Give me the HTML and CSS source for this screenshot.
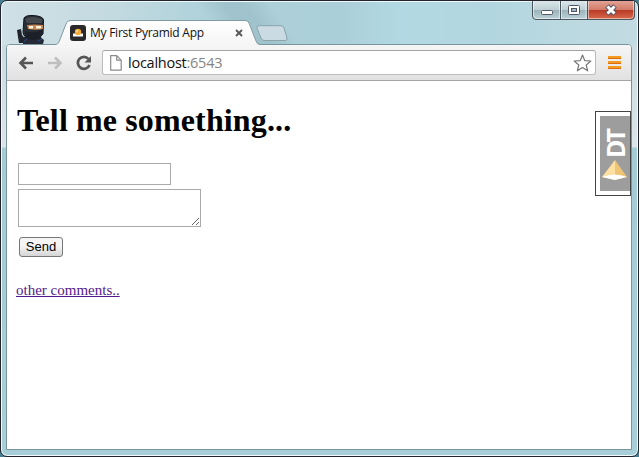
FILE: index.html
```html
<!DOCTYPE html>
<html lang="en">
<head>
<meta charset="utf-8">
<title>My First Pyramid App</title>
<link rel="stylesheet" href="styles.css">
</head>
<body>
<div class="window">
  <header class="tabstrip">
    <svg class="ninja" width="30" height="30" viewBox="0 0 30 30">
      <path d="M1 16l4-1 1 6 4 5-1 3H3l-1-6z" fill="#20232b"/>
      <path d="M7 30l1-7 4-1h11l5 4-1 4z" fill="#252a36"/>
      <path d="M8 4Q10 1 17 1.500Q27 2 27.500 6L27 20Q22 26 13 24Q7 23 7 18z" fill="#292d34" stroke="#111722"/>
      <path d="M9 5q6-4 17 0v4H11z" fill="#46494d"/>
      <path d="M11 11q8-1 16 0v4q-7 1.500-15 0z" fill="#c88752"/>
      <path d="M13 12h4v2.500h-4zM20 12h5v2.500h-5z" fill="#fff4df"/>
      <path d="M9 17q8 3 17-1l-1 8q-9 4-15 0z" fill="#1b2029"/>
      <path d="M8 28l3-3M22 27l4-2" stroke="#284a8d"/>
    </svg>
    <div class="tab">
      <svg class="tab-shape" width="205" height="26" viewBox="0 0 205 26">
        <defs><linearGradient id="tg" x2="0" y2="1"><stop stop-color="#fff"/><stop offset="1" stop-color="#f5f5f5"/></linearGradient></defs>
        <path d="M0 26V24.500Q3 24.500 4 22L11 4Q12 .500 15 .500H190Q193 .500 194 3L201 21Q202 24.500 205 24.500V26z" fill="url(#tg)"/>
        <path d="M0 24.500Q3 24.500 4 22L11 4Q12 .500 15 .500H190Q193 .500 194 3L201 21Q202 24.500 205 24.500" fill="none" stroke="#829ba3"/>
      </svg>
      <svg class="favicon" width="16" height="16" viewBox="0 0 16 16"><rect width="16" height="16" rx="3" fill="#29292b"/><path d="M3 8.500h3l2 1 2-1h3v3H3z" fill="#fff"/><circle cx="8" cy="7" r="3.200" fill="#f5ad3a"/><circle cx="7" cy="6" r="1" fill="#ffe29b"/></svg>
      <span class="tab-title">My First Pyramid App</span>
      <svg class="tab-close" width="8" height="8" viewBox="0 0 8 8"><path d="M1 1l6 6M7 1L1 7" stroke="#555" stroke-width="1.800"/></svg>
    </div>
    <svg class="new-tab" width="32" height="17" viewBox="0 0 32 17"><path d="M3 .700H25Q27 .700 28 3L31 13Q31.500 15.500 29 15.500H8Q6 15.500 5 13L1 3Q.500 .700 3 .700z" fill="#cbdbe3" stroke="#8aa4ac"/></svg>
    <svg class="controls" width="104" height="20" viewBox="0 0 104 20">
      <defs>
        <linearGradient id="cg" x2="0" y2="1"><stop stop-color="#dce7eb"/><stop offset=".48" stop-color="#bdcfd5"/><stop offset=".5" stop-color="#9bb3ba"/><stop offset="1" stop-color="#bed3d9"/></linearGradient>
        <linearGradient id="rg" x2="0" y2="1"><stop stop-color="#e3a294"/><stop offset=".48" stop-color="#d27a68"/><stop offset=".5" stop-color="#b83a25"/><stop offset="1" stop-color="#d96b4c"/></linearGradient>
      </defs>
      <path d="M.500 0V15Q.500 18.500 5 18.500H55V0z" fill="url(#cg)"/>
      <path d="M55 0V18.500H99Q102.500 18.500 102.500 15V0z" fill="url(#rg)"/>
      <path d="M1.500 0V14Q1.500 17.500 5 17.500H98Q101.500 17.500 101.500 14V0M27.500 0V17.500M29.500 0V17.500M54 0V17.500M56.500 0V17.500" fill="none" stroke="#fff" stroke-opacity=".5"/>
      <path d="M.500 0V15Q.500 18.500 4 18.500H99Q102.500 18.500 102.500 15V0M28.500 0V18M55.500 0V18" fill="none" stroke="#4a575f"/>
      <rect x="9.500" y="9.500" width="11" height="4" rx="1" fill="#fff" stroke="#525666"/>
      <rect x="36.500" y="4.500" width="11" height="9" rx="1" fill="#fff" stroke="#525666"/><rect x="39.500" y="7.500" width="5" height="3" fill="#a4bac2" stroke="#525666"/>
      <path d="M75 5l8 8M83 5l-8 8" stroke="#545363" stroke-width="5"/><path d="M75.500 5.500l7 7M82.500 5.500l-7 7" stroke="#fff" stroke-width="3"/>
    </svg>
  </header>
  <main class="browser">
    <nav class="toolbar">
      <svg class="nav-icon" width="16" height="14" viewBox="0 0 16 14"><path d="M15 7H3M8 1.500L2.500 7 8 12.500" fill="none" stroke="#555" stroke-width="2.600"/></svg>
      <svg class="nav-icon" width="16" height="14" viewBox="0 0 16 14"><path d="M1 7h12M8 1.500L13.500 7 8 12.500" fill="none" stroke="#bebebe" stroke-width="2.600"/></svg>
      <svg class="nav-icon" width="16" height="16" viewBox="0 0 16 16"><path d="M12.500 4A6 6 0 1 0 13.500 10" fill="none" stroke="#555" stroke-width="2.700"/><path d="M15 1v6.500H8.500z" fill="#555"/></svg>
      <div class="address">
        <svg width="12" height="16" viewBox="0 0 12 16"><path d="M.700 .700h6l4.500 4.500v10H.700zM6.700 .700v4.500h4.500" fill="#fff" stroke="#8b8b8b" stroke-width="1.200"/></svg>
        <span class="url">localhost<span>:6543</span></span>
        <svg class="star" width="19" height="18" viewBox="0 0 19 18"><path d="M9.500 1l2.300 5.700 6 .300-4.600 4 1.500 5.800-5.200-3.300-5.200 3.300 1.500-5.800-4.600-4 6-.300z" fill="#fff" stroke="#777" stroke-width="1.200" stroke-linejoin="round"/></svg>
      </div>
      <svg class="menu" width="13" height="13" viewBox="0 0 13 13"><path d="M0 1.500h13M0 6.500h13M0 11.500h13" stroke="#f39a20" stroke-width="3"/><path d="M0 2.500h13M0 7.500h13M0 12.500h13" stroke="#e06c12"/></svg>
    </nav>
    <section class="page">
      <h1>Tell me something...</h1>
      <form>
        <input type="text" aria-label="Name">
        <textarea aria-label="Comment"></textarea>
        <button type="button">Send</button>
      </form>
      <a href="#">other comments..</a>
      <aside class="debug">
        <div class="debug-inner">
          <span class="dt">DT</span>
          <svg width="26" height="20" viewBox="0 0 26 20"><path d="M13 0L0 17l13 3z" fill="#ffe0a0"/><path d="M13 0l12 17-12 3z" fill="#efc477"/><path d="M0 17q13-5 25 0l-12 3z" fill="#fff"/></svg>
        </div>
      </aside>
    </section>
  </main>
</div>
</body>
</html>
```
FILE: styles.css
```css
* { box-sizing: border-box; }
html { background: #477f91; }
body { margin: 0; width: 639px; height: 457px; overflow: hidden; }
.window {
  height: 457px;
  display: flex;
  flex-direction: column;
  padding: 0 6px 6px 5px;
  border: 1px solid #23232d;
  border-radius: 7px;
  box-shadow: inset 0 0 0 1px #effafd;
  background:
    linear-gradient(55deg, transparent 50%, rgba(119,155,166,.25) 54%, rgba(119,155,166,.25) 57%, transparent 61%) -110px 0 / 639px 44px no-repeat,
    linear-gradient(90deg, #cfe0e6 0, #c5dbe1 100px, #aed1da 210px, #abcfd8 340px, #b2d9e3 400px, #b2d6df 490px, #c3dbe2 100%) 0 0 / 100% 44px no-repeat,
    linear-gradient(#c3d7dc 0, #dce5e9 146px, #a5cbd4 147px, #a8ced7 100%);
}
.tabstrip { display: flex; height: 43px; flex: none; align-items: flex-end; position: relative; }
.ninja { margin-left: 10px; }
.tab { position: relative; display: flex; align-items: center; width: 205px; height: 26px; margin: 0 0 -1px 9px; padding: 2px 15px 0; z-index: 1; }
.tab-shape { position: absolute; left: 0; top: 1px; }
.favicon, .tab-title, .tab-close { position: relative; z-index: 1; }
.tab-title { margin-left: 4px; font: 12px/16px "Open Sans", "Noto Sans", sans-serif; color: #111; letter-spacing: -.25px; white-space: nowrap; }
.tab-close { margin-left: auto; margin-right: 2px; }
.new-tab { margin: 0 0 2px -4px; }
.controls { margin: 0 -4px 0 auto; align-self: flex-start; }
.browser { flex: 1; min-height: 0; display: flex; flex-direction: column; border: 1px solid #78949d; border-radius: 4px 4px 0 0; background: #fff; overflow: hidden; }
.toolbar { flex: none; height: 36px; display: flex; align-items: center; padding: 0 10px 0 11px; border-bottom: 1px solid #a5a5a5; background: linear-gradient(#f6f6f6, #e1e1e1); }
.nav-icon { margin-right: 13px; }
.address { flex: 1; display: flex; align-items: center; height: 25px; margin-right: 12px; margin-left: -3px; padding: 0 3px 0 7px; background: #fff; border: 1px solid #bcbcbc; border-top-color: #a4a4a4; border-radius: 3px; }
.url { margin-left: 6px; font: 14.5px/20px "Open Sans", "Noto Sans", sans-serif; letter-spacing: -.25px; color: #111; }
.url span { color: #858585; }
.star { margin-left: auto; }
.page { flex: 1; position: relative; padding: 20px 9px; font-family: "Liberation Serif", serif; }
h1 { margin: 0; padding-left: 1px; font-size: 32px; line-height: 38px; letter-spacing: .13px; }
form { display: flex; flex-direction: column; align-items: flex-start; padding: 24px 0 0 2px; }
input { width: 153px; height: 22px; margin: 0; border: 1px solid #aaa; padding: 0; }
textarea { width: 183px; height: 38px; margin: 4px 0 0; border: 1px solid #aaa; padding: 0; resize: both; }
button { width: 44px; height: 20px; margin: 10px 0 0 1px; padding: 0; border: 1px solid #777; border-radius: 3px; background: linear-gradient(#f5f5f5 45%, #d5d5d5); font: 13px/16px "Liberation Sans", sans-serif; color: #000; }
a { display: inline-block; margin-top: 24px; color: #551a8b; font-size: 15px; line-height: 18px; }
.debug { position: absolute; right: 0; top: 30px; width: 36px; height: 85px; padding: 4px 0 4px 4px; border: 1px solid #444; background: #fff; }
.debug-inner { height: 75px; display: flex; flex-direction: column; align-items: center; gap: 2px; padding-top: 13px; background: #9d9d9d; }
.dt { writing-mode: vertical-rl; transform: rotate(180deg); color: #fff; font: bold 25px/26px "Open Sans", sans-serif; height: 29px; letter-spacing: -3px; }
```
